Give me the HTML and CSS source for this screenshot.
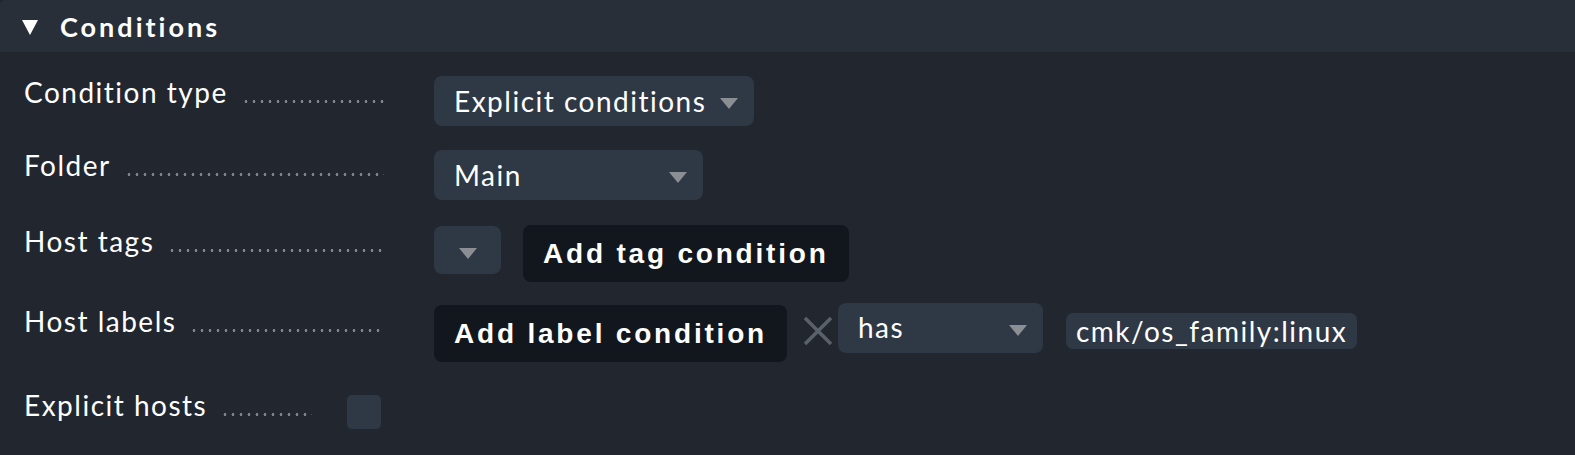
FILE: index.html
```
<!DOCTYPE html>
<html lang="en">
<head>
    <meta charset="UTF-8">
    <title>Conditions</title>
    <link rel="stylesheet" href="styles.css">
</head>
<body>

    <div class="section">
        <div class="section-head">
            <span class="toggle"></span>
            <span class="title">Conditions</span>
        </div>

        <div class="section-body">
            <div class="row row-type">
                <div class="label"><span>Condition type</span><span class="dots"></span></div>
                <div class="controls">
                    <div class="select select-type">Explicit conditions <span class="caret"></span></div>
                </div>
            </div>

            <div class="row row-folder">
                <div class="label"><span>Folder</span><span class="dots"></span></div>
                <div class="controls">
                    <div class="select select-folder">Main <span class="caret"></span></div>
                </div>
            </div>

            <div class="row row-tags">
                <div class="label"><span>Host tags</span><span class="dots"></span></div>
                <div class="controls">
                    <div class="select select-empty"><span class="caret"></span></div>
                    <button class="btn">Add tag condition</button>
                </div>
            </div>

            <div class="row row-labels">
                <div class="label"><span>Host labels</span><span class="dots"></span></div>
                <div class="controls">
                    <button class="btn">Add label condition</button>
                    <svg class="remove" width="30" height="30" viewBox="0 0 30 30">
                        <path d="M2 2 L28 28 M28 2 L2 28" stroke="#5b616b" stroke-width="3.5" fill="none"/>
                    </svg>
                    <div class="select select-op">has <span class="caret"></span></div>
                    <span class="tag">cmk/os_family:linux</span>
                </div>
            </div>

            <div class="row row-hosts">
                <div class="label label-short"><span>Explicit hosts</span><span class="dots"></span></div>
                <span class="checkbox"></span>
            </div>
        </div>
    </div>

</body>
</html>
```

FILE: styles.css
```
* {
    margin: 0;
    padding: 0;
    box-sizing: border-box;
}

body {
    font-family: 'Lato', 'Liberation Sans', sans-serif;
    background: #22272f;
    color: #fff;
    width: 1575px;
    height: 455px;
    overflow: hidden;
}

.section {
    height: 455px;
    background: #22272f;
}

.section-head {
    height: 52px;
    background: #292f39;
    display: flex;
    align-items: center;
    padding-left: 22px;
    border-top-left-radius: 6px;
}

.toggle {
    width: 0;
    height: 0;
    border-left: 8px solid transparent;
    border-right: 8px solid transparent;
    border-top: 15px solid #fff;
    margin-right: 22px;
    margin-top: 2px;
}

.title {
    font-size: 27px;
    font-weight: bold;
    letter-spacing: 3px;
}

.section-body {
    padding: 24px 0 0 24px;
}

.row {
    display: flex;
    align-items: flex-start;
}

.row-type { height: 74px; }
.row-folder { height: 75px; }
.row-tags { height: 80px; }
.row-labels { height: 88px; }

.label {
    width: 360px;
    display: flex;
    align-items: baseline;
    font-size: 28px;
    line-height: 32px;
    margin-right: 50px;
    letter-spacing: 1.5px;
}

.label-short {
    width: 288px;
    margin-right: 35px;
}

.dots {
    flex: 1;
    height: 3px;
    margin-left: 14px;
    background: radial-gradient(circle, #7e838b 1.3px, transparent 1.6px) left center / 8px 3px repeat-x;
}

.row-folder .label { margin-top: -1px; }
.row-hosts .label { margin-top: -4px; }

.controls {
    display: flex;
    align-items: flex-start;
}

.select {
    height: 50px;
    background: #2f3845;
    border-radius: 8px;
    font-size: 28px;
    line-height: 50px;
    padding-left: 20px;
    position: relative;
    letter-spacing: 1.5px;
}

.caret {
    position: absolute;
    right: 16px;
    top: 22px;
    width: 0;
    height: 0;
    border-left: 9px solid transparent;
    border-right: 9px solid transparent;
    border-top: 11px solid #8b8e93;
}

.select-type { width: 320px; }
.select-folder { width: 269px; }
.select-empty { width: 67px; margin-top: 1px; height: 48px; }
.select-empty .caret { right: 24px; }
.select-op { width: 205px; margin-top: -2px; line-height: 48px; }

.btn {
    font-family: 'Liberation Sans', Arial, sans-serif;
    font-weight: bold;
    font-size: 28px;
    letter-spacing: 2.8px;
    color: #fff;
    background: #12171d;
    border: none;
    border-radius: 8px;
    height: 57px;
    padding: 0 20px;
}

.row-tags .btn {
    margin-left: 22px;
}

.remove {
    margin: 11px 5px 0 16px;
}

.tag {
    background: #2f3845;
    border-radius: 7px;
    font-size: 28px;
    line-height: 36px;
    padding: 0 10px;
    margin: 8px 0 0 23px;
    letter-spacing: 1.5px;
}

.checkbox {
    width: 34px;
    height: 34px;
    background: #2f3845;
    border-radius: 5px;
    margin-top: 2px;
}
```
